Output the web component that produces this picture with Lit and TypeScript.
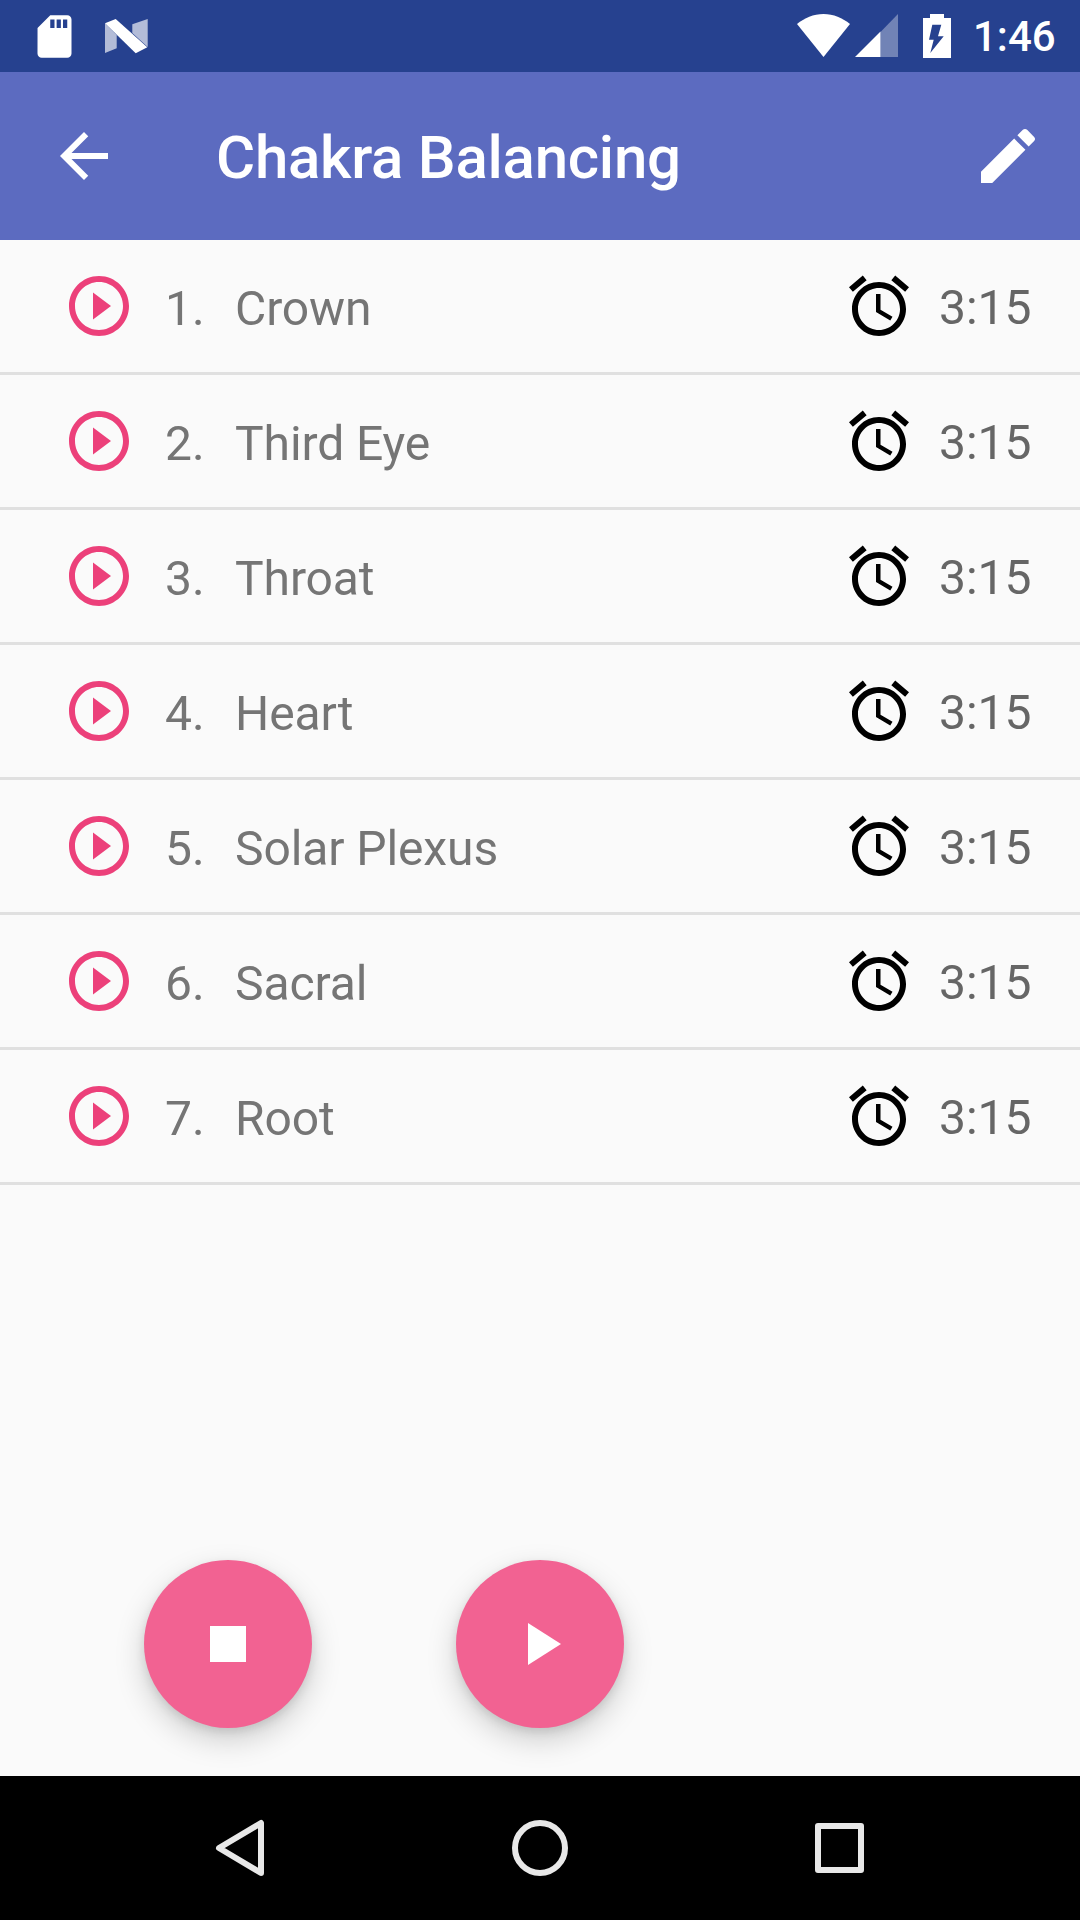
import { LitElement, html, css } from 'lit';
import { customElement } from 'lit/decorators.js';

const chakras = ['Crown', 'Third Eye', 'Throat', 'Heart', 'Solar Plexus', 'Sacral', 'Root'];

const PLAY_CIRCLE = 'M10 16.5l6-4.5-6-4.5v9zM12 2C6.48 2 2 6.48 2 12s4.48 10 10 10 10-4.48 10-10S17.52 2 12 2zm0 18c-4.41 0-8-3.59-8-8s3.59-8 8-8 8 3.59 8 8-3.59 8-8 8z';
const ALARM = 'M22 5.72l-4.6-3.86-1.29 1.53 4.6 3.86L22 5.72zM7.88 3.39L6.6 1.86 2 5.71l1.29 1.53 4.59-3.85zM12.5 8H11v6l4.75 2.85.75-1.23-4-2.37V8zM12 4c-4.97 0-9 4.03-9 9s4.02 9 9 9c4.97 0 9-4.03 9-9s-4.03-9-9-9zm0 16c-3.87 0-7-3.13-7-7s3.13-7 7-7 7 3.13 7 7-3.13 7-7 7z';
const ARROW_BACK = 'M20 11H7.83l5.59-5.59L12 4l-8 8 8 8 1.41-1.41L7.83 13H20v-2z';
const EDIT = 'M3 17.25V21h3.75L17.81 9.94l-3.75-3.75L3 17.25zM20.71 7.04c.39-.39.39-1.02 0-1.41l-2.34-2.34c-.39-.39-1.02-.39-1.41 0l-1.83 1.83 3.75 3.75 1.83-1.83z';
const SD_CARD = 'M18 2h-8L4.02 8 4 20c0 1.1.9 2 2 2h12c1.1 0 2-.9 2-2V4c0-1.1-.9-2-2-2zm-6 6h-2V4h2v4zm3 0h-2V4h2v4zm3 0h-2V4h2v4z';

const icon = (d: string, cls: string) => html`<svg class=${cls} viewBox="0 0 24 24"><path d=${d}></path></svg>`;

@customElement('app-root')
export class AppRoot extends LitElement {
  static styles = css`
    :host {
      display: flex;
      flex-direction: column;
      width: 1080px;
      height: 1920px;
      background: #fafafa;
      font-family: Roboto, "Liberation Sans", sans-serif;
      overflow: hidden;
    }
    svg { display: block; flex: none; }

    .status {
      height: 72px;
      flex: none;
      background: #26418f;
      position: relative;
    }
    .status svg { position: absolute; fill: #fff; }
    .sd { left: 29px; top: 11px; width: 51px; height: 51px; }
    .nlogo { left: 105px; top: 18px; width: 43px; height: 36px; }
    .wifi { left: 797px; top: 14px; width: 53px; height: 43px; }
    .signal { left: 855px; top: 14px; width: 44px; height: 43px; }
    .battery { left: 923px; top: 14px; width: 28px; height: 44px; }
    .clock {
      position: absolute;
      left: 973px;
      top: 13px;
      font-size: 42px;
      line-height: 48px;
      font-weight: 500;
      color: #fff;
    }

    .bar {
      height: 168px;
      flex: none;
      background: #5c6bc0;
      display: flex;
      align-items: center;
      padding: 0 36px 0 48px;
      color: #fff;
    }
    .bar svg { width: 72px; height: 72px; fill: #fff; }
    .title {
      flex: 1;
      margin-left: 96px;
      padding-top: 4px;
      font-size: 60px;
      font-weight: 500;
      line-height: 72px;
      letter-spacing: -0.25px;
    }

    .list { flex: 1; }
    .row {
      height: 132px;
      border-bottom: 3px solid #e0e0e0;
      display: flex;
      align-items: center;
      padding: 0 48px 0 63px;
      font-size: 48px;
      color: #757575;
    }
    /* own layer, so the text gets grey antialiasing like the reference */
    .num, .name, .time { will-change: transform; }
    .play { width: 72px; height: 72px; fill: #ec407a; }
    .num { width: 70px; margin-left: 30px; padding-top: 4px; }
    .name { flex: 1; padding-top: 4px; letter-spacing: -0.1px; }
    .alarm { width: 72px; height: 72px; fill: #000; }
    .time { margin-left: 24px; padding-top: 2px; color: #666; }

    .fabs {
      flex: none;
      height: 216px;
      display: flex;
      gap: 144px;
      padding-left: 144px;
    }
    .fab {
      width: 168px;
      height: 168px;
      border-radius: 50%;
      background: #f26292;
      box-shadow: 0 12px 30px rgba(0, 0, 0, 0.18), 0 4px 10px rgba(0, 0, 0, 0.1);
      display: flex;
      align-items: center;
      justify-content: center;
    }
    .fab svg { width: 72px; height: 72px; fill: #fff; }

    .nav {
      height: 144px;
      flex: none;
      background: #000;
      position: relative;
    }
    .nav svg {
      position: absolute;
      top: 40px;
      width: 64px;
      height: 64px;
      fill: none;
      stroke: #e8e8e8;
      stroke-width: 6;
      stroke-linejoin: round;
    }
    .nav-back { left: 208px; }
    .nav-home { left: 508px; }
    .nav-recent { left: 808px; }
  `;

  render() {
    return html`
      <div class="status">
        ${icon(SD_CARD, 'sd')}
        <svg class="nlogo" viewBox="0 0 43 36">
          <path opacity="0.65" d="M0 5.300V35L11.700 30.300V17zM27.300 6.300L42.700 1V29L27.300 15z"></path>
          <path d="M0 5.300L10.700 1L42.300 29.300L30.700 35.300z"></path>
        </svg>
        <svg class="wifi" viewBox="0 0 53 43">
          <path d="M26.500 43L0 10C7.500 4 16.500 0 26.500 0S45.500 4 53 10z"></path>
        </svg>
        <svg class="signal" viewBox="0 0 44 43">
          <path opacity="0.35" d="M25.500 43V18L43 0V43z"></path>
          <path d="M0 43L25.500 17.500V43z"></path>
        </svg>
        <svg class="battery" viewBox="0 0 28 44">
          <path fill-rule="evenodd" d="M7 0H21V4H28V44H0V4H7zM9.300 10.700L6 25.700H10.700L7.300 39L20.700 22.300H15L18.300 10.700z"></path>
        </svg>
        <span class="clock">1:46</span>
      </div>
      <div class="bar">
        ${icon(ARROW_BACK, '')}
        <span class="title">Chakra Balancing</span>
        ${icon(EDIT, '')}
      </div>
      <div class="list">
        ${chakras.map(
          (name, i) => html`
            <div class="row">
              ${icon(PLAY_CIRCLE, 'play')}
              <span class="num">${i + 1}.</span>
              <span class="name">${name}</span>
              ${icon(ALARM, 'alarm')}
              <span class="time">3:15</span>
            </div>
          `
        )}
      </div>
      <div class="fabs">
        <div class="fab">${icon('M6 6h12v12H6z', '')}</div>
        <div class="fab">${icon('M8 5v14l11-7z', '')}</div>
      </div>
      <div class="nav">
        <svg class="nav-back" viewBox="0 0 64 64"><path d="M53 7V57L11 32z"></path></svg>
        <svg class="nav-home" viewBox="0 0 64 64"><circle cx="32" cy="32" r="25"></circle></svg>
        <svg class="nav-recent" viewBox="0 0 64 64"><rect x="10" y="10" width="43" height="44"></rect></svg>
      </div>
    `;
  }
}
